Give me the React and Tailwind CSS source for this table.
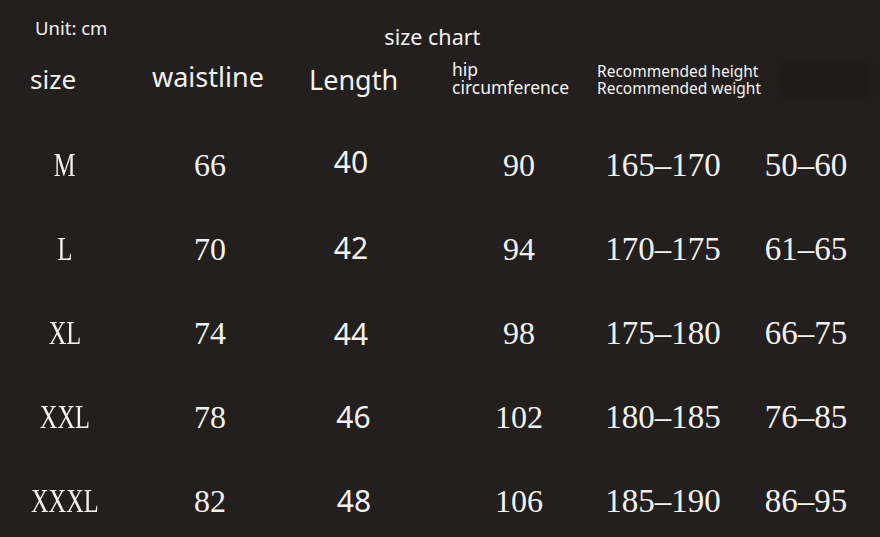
import React from "react";

const rows = [
  ["M", "66", "40", "90", "165–170", "50–60"],
  ["L", "70", "42", "94", "170–175", "61–65"],
  ["XL", "74", "44", "98", "175–180", "66–75"],
  ["XXL", "78", "46", "102", "180–185", "76–85"],
  ["XXXL", "82", "48", "106", "185–190", "86–95"],
];

const lenOffset = ["-mt-[7px]", "-mt-[3px]", "mt-[2px]", "mt-[0px] ml-[5px]", "mt-[0px] ml-[6px]"];

const serif = { fontFamily: '"Liberation Serif", "DejaVu Serif", serif' };
const sans = { fontFamily: '"Noto Sans", "Open Sans", sans-serif' };

export default function App() {
  return (
    <div className="w-[880px] h-[537px] overflow-hidden bg-[#221f1e] text-[#f4f2f0]" style={sans}>
      <div className="flex items-start h-[56px]">
        <div className="ml-[35px] mt-[15px] text-[18.5px] leading-[26px]">Unit: cm</div>
        <div className="ml-[277px] mt-[23px] text-[21.5px] leading-[28px]">size chart</div>
      </div>
      <div className="flex items-center h-[44px] pl-[30px]">
        <div className="w-[122px] text-[26px] leading-[30px] mt-[1px]">size</div>
        <div className="w-[157px] text-[27px] leading-[30px] -mt-[3px]">waistline</div>
        <div className="w-[143px] text-[27px] leading-[32px] mt-[4px]">Length</div>
        <div className="w-[145px] text-[17.5px] leading-[18px] flex flex-col">
          <span>hip</span>
          <span>circumference</span>
        </div>
        <div className="flex flex-col text-[15.5px] leading-[17px] mt-[3px]">
          <span>Recommended height</span>
          <span>Recommended weight</span>
        </div>
        <div className="ml-[19px] mt-[4px] w-[90px] h-[34px] bg-[#1e1b1a] blur-[4px] rounded-md" />
      </div>
      <div className="mt-[23px] grid grid-cols-[130px_160px_122px_214px_74px_212px] w-[912px]">
        {rows.map((r, i) => (
          <React.Fragment key={i}>
            <div className="h-[84px] flex items-center justify-center" style={serif}>
              <span className="inline-block text-[33px] leading-none scale-x-[0.74]">{r[0]}</span>
            </div>
            <div className="h-[84px] flex items-center justify-center text-[32px] leading-none" style={serif}>
              {r[1]}
            </div>
            <div className="h-[84px] flex items-center justify-center text-[30px] leading-none" style={sans}>
              <span className={lenOffset[i]}>{r[2]}</span>
            </div>
            <div className="h-[84px] flex items-center justify-center text-[32px] leading-none" style={serif}>
              {r[3]}
            </div>
            <div className="h-[84px] flex items-center justify-center text-[33px] leading-none whitespace-nowrap" style={serif}>
              {r[4]}
            </div>
            <div className="h-[84px] flex items-center justify-center text-[33px] leading-none whitespace-nowrap" style={serif}>
              {r[5]}
            </div>
          </React.Fragment>
        ))}
      </div>
    </div>
  );
}
